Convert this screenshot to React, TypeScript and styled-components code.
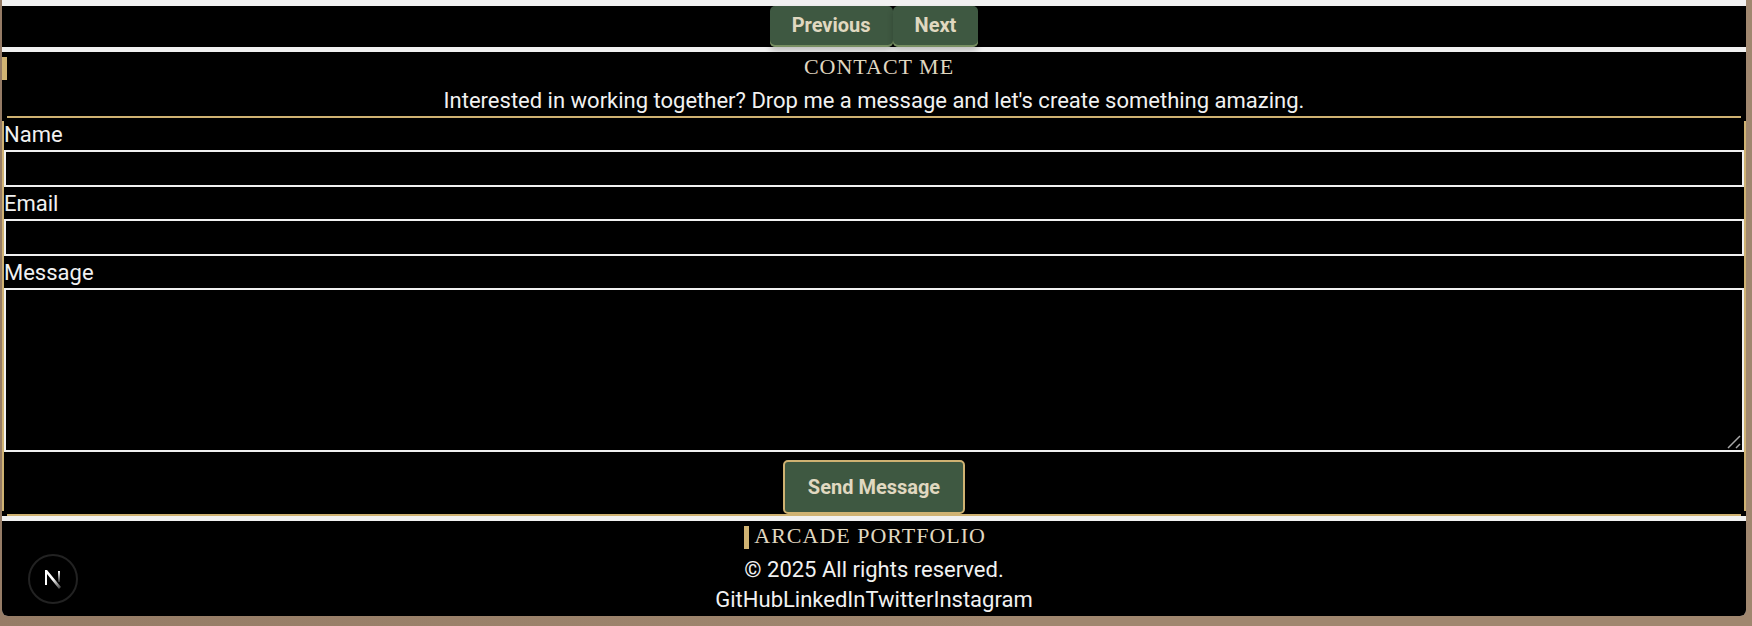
import React from "react";
import styled, { createGlobalStyle } from "styled-components";

const GlobalStyle = createGlobalStyle`
  * { box-sizing: border-box; }
  body {
    margin: 0;
    background: #9d836b;
    color: #f1f1f1;
    font-family: Roboto, "Liberation Sans", sans-serif;
    font-size: 22px;
    line-height: 32px;
  }
`;

const Desktop = styled.div`
  min-height: 100vh;
  padding: 0 6px 10px 2px;
  background: linear-gradient(100deg, #957b65, #a0876f 60%);
`;

const Screen = styled.div`
  overflow: hidden;
  padding-top: 6px;
  background: #f1f1f1;
  border-radius: 0 0 6px 6px;
`;

const Pager = styled.nav`
  display: flex;
  justify-content: center;
  background: #000;
`;

const Panel = styled.section`
  margin-top: 5px;
  background: #000;
`;

const Footer = styled.footer`
  display: flex;
  flex-direction: column;
  align-items: center;
  padding-bottom: 1px;
  margin-top: 5px;
  background: #000;
`;

const Heading = styled.h2<{ $centered?: boolean }>`
  position: relative;
  margin: 0;
  padding: 0 0 2px 10px;
  color: #e0d8c0;
  font: 400 22px/30px "Liberation Serif", serif;
  letter-spacing: 1px;
  text-align: ${(p) => (p.$centered ? "center" : "left")};

  &::before {
    content: "";
    position: absolute;
    left: 0;
    top: 5px;
    width: 5px;
    height: 23px;
    background: #cfb272;
  }
`;

const Text = styled.p<{ $centered?: boolean }>`
  margin: 0;
  padding-top: 2px;
  line-height: 30px;
  text-align: ${(p) => (p.$centered ? "center" : "left")};
`;

const Label = styled.label`
  padding-top: 2px;
  line-height: 30px;
`;

const Button = styled.button<{ $outlined?: boolean }>`
  position: relative;
  padding: ${(p) => (p.$outlined ? "12px 23px" : "6px 22px 9px")};
  color: #e0d8c0;
  background: #3e5841;
  border: 0 solid #cfb272;
  border-width: ${(p) => (p.$outlined ? "2px" : "0")};
  border-radius: 5px;
  box-shadow: ${(p) => (p.$outlined ? "none" : "inset 0 -2px #788f62, 0 4px 6px rgba(0, 0, 0, 0.2)")};
  font: 700 20px/26px Roboto, "Liberation Sans", sans-serif;
`;

const Form = styled.form`
  --gold: linear-gradient(#cfb272, #cfb272);
  display: flex;
  flex-direction: column;
  padding: 2px;
  background:
    var(--gold) center top / calc(100% - 10px) 2px no-repeat,
    var(--gold) center bottom / calc(100% - 10px) 2px no-repeat,
    var(--gold) left center / 2px calc(100% - 10px) no-repeat,
    var(--gold) right center / 2px calc(100% - 10px) no-repeat;
`;

const Input = styled.input`
  display: block;
  width: 100%;
  height: 37px;
  padding: 2px 6px;
  color: #f1f1f1;
  background: transparent;
  border: 2px solid #f1f1f1;
  border-radius: 0;
  font: inherit;
`;

const TextArea = styled(Input).attrs({ as: "textarea" })`
  height: 164px;
  resize: vertical;

  &::-webkit-resizer {
    background: transparent;
  }
`;

const MessageBox = styled.div`
  position: relative;

  svg {
    position: absolute;
    right: 3px;
    bottom: 3px;
    pointer-events: none;
  }
`;

const Actions = styled.div`
  display: flex;
  justify-content: center;
  padding-top: 8px;
`;

const Links = styled.div`
  display: flex;
  line-height: 30px;
  a { color: inherit; text-decoration: none; }
`;

const Badge = styled.button`
  position: fixed;
  left: 28px;
  bottom: 22px;
  display: grid;
  place-items: center;
  width: 50px;
  height: 50px;
  padding: 0;
  background: #000;
  border: 2px solid #222;
  border-radius: 50%;
`;

export default function App() {
  return (
    <>
      <GlobalStyle />
      <Desktop>
        <Screen>
          <Pager>
            <Button type="button">Previous</Button>
            <Button type="button">Next</Button>
          </Pager>
          <Panel>
            <Heading $centered>CONTACT ME</Heading>
            <Text $centered>
              Interested in working together? Drop me a message and let's create something amazing.
            </Text>
            <Form onSubmit={(e) => e.preventDefault()}>
              <Label htmlFor="name">Name</Label>
              <Input id="name" />
              <Label htmlFor="email">Email</Label>
              <Input id="email" type="email" />
              <Label htmlFor="message">Message</Label>
              <MessageBox>
                <TextArea id="message" />
                <svg width="14" height="14" viewBox="0 0 14 14" stroke="#a8a8a8" strokeWidth="1.5" aria-hidden="true">
                  <path d="M1 13L13 1M9 13L13 9" />
                </svg>
              </MessageBox>
              <Actions>
                <Button $outlined type="submit">Send Message</Button>
              </Actions>
            </Form>
          </Panel>
          <Footer>
            <div>
              <Heading>ARCADE PORTFOLIO</Heading>
              <Text>© 2025 All rights reserved.</Text>
            </div>
            <Links>
              <a href="#github">GitHub</a>
              <a href="#linkedin">LinkedIn</a>
              <a href="#twitter">Twitter</a>
              <a href="#instagram">Instagram</a>
            </Links>
          </Footer>
        </Screen>
      </Desktop>
      <Badge type="button" aria-label="Open developer tools">
        <svg width="18" height="20" viewBox="0 0 18 20" fill="none">
          <defs>
            <linearGradient id="diagonal" x1="9" y1="10" x2="17" y2="20" gradientUnits="userSpaceOnUse">
              <stop stopColor="#fff" />
              <stop offset="1" stopColor="#fff" stopOpacity="0.2" />
            </linearGradient>
            <linearGradient id="stem" x1="0" y1="2" x2="0" y2="14" gradientUnits="userSpaceOnUse">
              <stop stopColor="#fff" />
              <stop offset="1" stopColor="#fff" stopOpacity="0.1" />
            </linearGradient>
          </defs>
          <path d="M1 1H3L17 18L15 20L3 5V16H1Z" fill="url(#diagonal)" />
          <path d="M15 2V13" stroke="url(#stem)" strokeWidth="2" />
        </svg>
      </Badge>
    </>
  );
}
